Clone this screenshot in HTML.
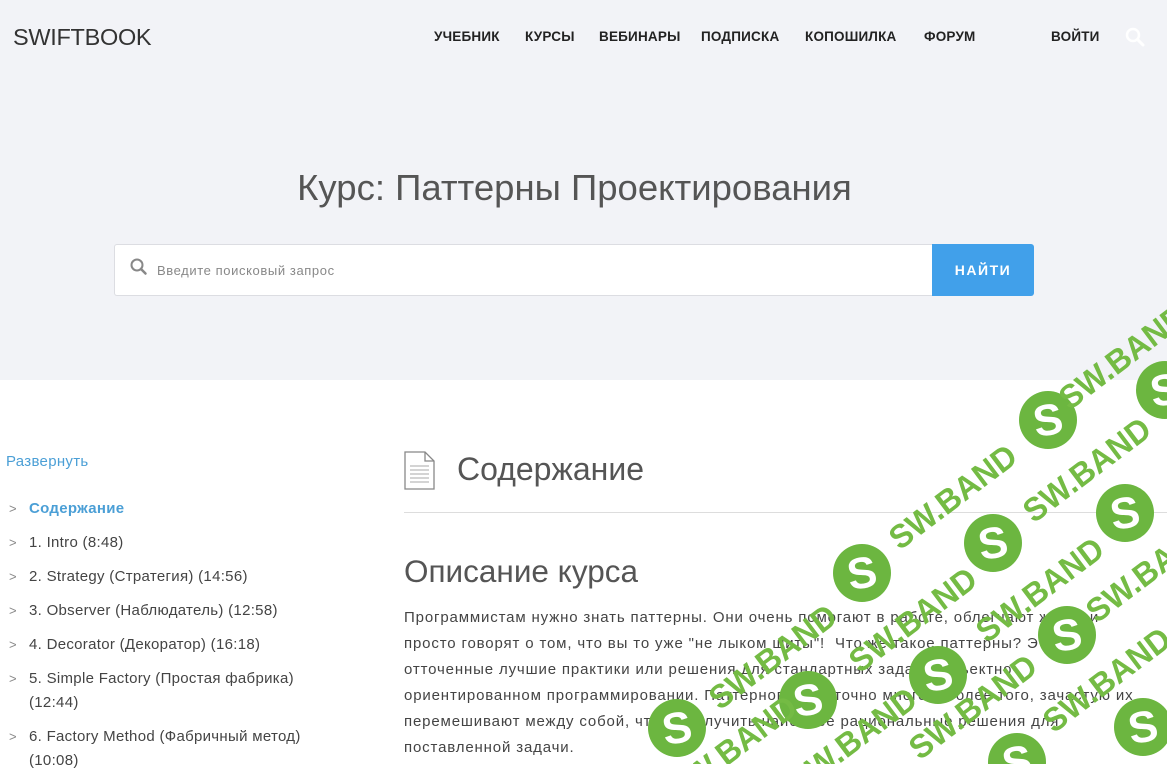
<!DOCTYPE html>
<html><head><meta charset="utf-8">
<style>
*{margin:0;padding:0;box-sizing:border-box}
html,body{width:1167px;height:764px;overflow:hidden;background:#fff;font-family:"Liberation Sans",sans-serif}
.hero{position:absolute;left:0;top:0;width:1167px;height:380px;background:#f2f3f7}
.logo{position:absolute;left:13px;top:24px;font-size:23.5px;color:#333;letter-spacing:-0.3px}
.nav{position:absolute;top:29px;font-size:13.5px;font-weight:bold;color:#222;letter-spacing:0.2px}
h1{position:absolute;left:0;width:1149px;text-align:center;top:167px;font-size:36.5px;font-weight:normal;color:#555}
.search{position:absolute;left:114px;top:244px;width:819px;height:52px;background:#fff;border:1px solid #dcdde2;border-right:none;border-radius:3px 0 0 3px}
.search span{position:absolute;left:42px;top:18px;font-size:13px;color:#888;letter-spacing:0.6px}
.btn{position:absolute;left:932px;top:244px;width:102px;height:52px;background:#41a0ea;color:#fff;font-weight:bold;font-size:14px;letter-spacing:1.5px;text-align:center;line-height:52px;border-radius:0 3px 3px 0}
.exp{position:absolute;left:6px;top:453px;font-size:15px;color:#4b9fd6;letter-spacing:0.3px}
.it{position:absolute;left:29px;font-size:15px;color:#444;line-height:24px;width:320px;letter-spacing:0.3px}
.ch{position:absolute;left:9px;font-size:13px;color:#888}
h2{position:absolute;left:457px;top:451px;font-size:32px;color:#555;font-weight:normal}
.hr{position:absolute;left:404px;top:512px;width:763px;height:1px;background:#ddd}
h3{position:absolute;left:404px;top:553px;font-size:31.5px;color:#555;font-weight:normal}
.p{position:absolute;left:404px;top:605px;font-size:15px;color:#444;line-height:26px;white-space:nowrap;letter-spacing:0.85px}
</style></head><body>
<div class="hero"></div>
<div class="logo">SWIFTBOOK</div>
<div class="nav" style="left:434px">УЧЕБНИК</div>
<div class="nav" style="left:525px">КУРСЫ</div>
<div class="nav" style="left:599px">ВЕБИНАРЫ</div>
<div class="nav" style="left:701px">ПОДПИСКА</div>
<div class="nav" style="left:805px">КОПОШИЛКА</div>
<div class="nav" style="left:924px">ФОРУМ</div>
<div class="nav" style="left:1051px">ВОЙТИ</div>
<svg style="position:absolute;left:1124px;top:26px" width="22" height="22" viewBox="0 0 22 22"><circle cx="9" cy="9" r="6" fill="none" stroke="#fff" stroke-width="2.5"/><path d="M13.5 13.5L19 19" stroke="#fff" stroke-width="3" stroke-linecap="round"/></svg>
<h1>Курс: Паттерны Проектирования</h1>
<div class="search"><svg style="position:absolute;left:14px;top:12px" width="20" height="20" viewBox="0 0 20 20"><circle cx="8" cy="8" r="5.5" fill="none" stroke="#888" stroke-width="2"/><path d="M12 12L16.5 16.5" stroke="#888" stroke-width="2.5" stroke-linecap="round"/></svg><span>Введите поисковый запрос</span></div>
<div class="btn">НАЙТИ</div>

<div class="exp">Развернуть</div>
<div class="ch" style="top:501px">&gt;</div><div class="it" style="top:497px;color:#4b9fd6;font-weight:bold">Содержание</div>
<div class="ch" style="top:535px">&gt;</div><div class="it" style="top:531px">1. Intro (8:48)</div>
<div class="ch" style="top:569px">&gt;</div><div class="it" style="top:565px">2. Strategy (Стратегия) (14:56)</div>
<div class="ch" style="top:603px">&gt;</div><div class="it" style="top:599px">3. Observer (Наблюдатель) (12:58)</div>
<div class="ch" style="top:637px">&gt;</div><div class="it" style="top:633px">4. Decorator (Декоратор) (16:18)</div>
<div class="ch" style="top:671px">&gt;</div><div class="it" style="top:667px">5. Simple Factory (Простая фабрика)<br>(12:44)</div>
<div class="ch" style="top:729px">&gt;</div><div class="it" style="top:725px">6. Factory Method (Фабричный метод)<br>(10:08)</div>

<svg style="position:absolute;left:404px;top:451px" width="31" height="39" viewBox="0 0 31 39"><path d="M1 1H21L30 10V38H1Z" fill="#fff" stroke="#888" stroke-width="1.3"/><path d="M21 1V10H30" fill="none" stroke="#888" stroke-width="1.3"/><path d="M6 15H25M6 19H25M6 23H25M6 27H25M6 31H25" stroke="#aaa" stroke-width="1"/></svg>
<h2>Содержание</h2>
<div class="hr"></div>
<h3>Описание курса</h3>
<div class="p">Программистам нужно знать паттерны. Они очень помогают в работе, облегчают жизнь и<br>просто говорят о том, что вы то уже "не лыком шиты"!&nbsp; Что же такое паттерны? Это<br>отточенные лучшие практики или решения для стандартных задач в объектно-<br>ориентированном программировании. Паттернов достаточно много и более того, зачастую их<br>перемешивают между собой, чтобы получить наиболее рациональные решения для<br>поставленной задачи.</div>

<svg style="position:absolute;left:0;top:0" width="1167" height="764" viewBox="0 0 1167 764">
<defs>
<g id="c"><circle r="29" fill="#6cb640"/><text x="0" y="15" text-anchor="middle" font-family="Liberation Sans,sans-serif" font-weight="bold" font-size="44" fill="#fff" transform="rotate(-10)">S</text></g>
<g id="t"><text x="0" y="11" text-anchor="middle" font-family="Liberation Sans,sans-serif" font-weight="bold" font-size="33" fill="#74bb44" textLength="150" lengthAdjust="spacingAndGlyphs" transform="rotate(-37)">SW.BAND</text></g>
</defs>
<use href="#c" x="1048" y="420"/><use href="#c" x="993" y="543"/><use href="#c" x="862" y="573"/>
<use href="#c" x="1125" y="513"/><use href="#c" x="1165" y="390"/><use href="#c" x="1067" y="635"/>
<use href="#c" x="938" y="675"/><use href="#c" x="808" y="700"/><use href="#c" x="677" y="728"/>
<use href="#c" x="1143" y="727"/><use href="#c" x="1017" y="762"/>
<use href="#t" x="953" y="497"/><use href="#t" x="1087" y="470"/><use href="#t" x="1123" y="357"/>
<use href="#t" x="773" y="657"/><use href="#t" x="913" y="620"/><use href="#t" x="1040" y="590"/>
<use href="#t" x="1150" y="570"/><use href="#t" x="973" y="707"/><use href="#t" x="1107" y="680"/>
<use href="#t" x="853" y="740"/><use href="#t" x="733" y="748"/>
</svg>
</body></html>
